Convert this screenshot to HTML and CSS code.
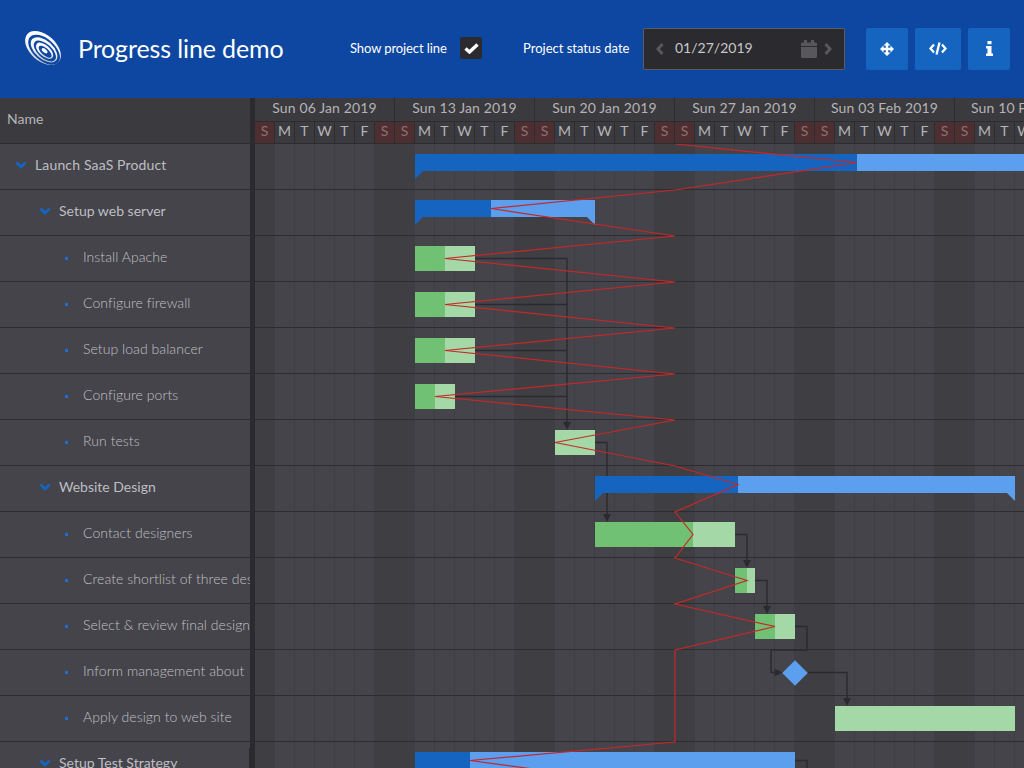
FILE: index.html
```html
<!DOCTYPE html>
<html>
<head>
    <title>Progress line demo</title>
    <link rel="stylesheet" href="styles.css">
</head>
<body>
    <header class="topbar">
        <svg class="logo" width="38" height="38" viewBox="0 0 38 38">
            <defs>
                <linearGradient id="logo-shine" x1="0" y1="0" x2="1" y2="1">
                    <stop offset="0" stop-color="#ffffff"/>
                    <stop offset="0.55" stop-color="#f2f4f8"/>
                    <stop offset="1" stop-color="#a9adb6"/>
                </linearGradient>
            </defs>
            <g transform="rotate(42 19 19)">
                <ellipse cx="19" cy="19" rx="21" ry="13" fill="url(#logo-shine)"/>
                <ellipse cx="21" cy="19.600" rx="19" ry="10.800" fill="#0d47a1"/>
                <ellipse cx="21" cy="19.600" rx="16" ry="9" fill="url(#logo-shine)"/>
                <ellipse cx="22.400" cy="20" rx="13.500" ry="7" fill="#0d47a1"/>
                <ellipse cx="22" cy="20" rx="10.500" ry="5.500" fill="url(#logo-shine)"/>
                <ellipse cx="23" cy="20.300" rx="8" ry="3.600" fill="#0d47a1"/>
                <ellipse cx="22" cy="20" rx="3.500" ry="1.800" fill="#ffffff"/>
            </g>
        </svg>
        <h1 class="title">Progress line demo</h1>
        <label class="toggle">
            <span>Show project line</span>
            <span class="checkbox">
                <svg width="15" height="11" viewBox="0 0 15 11"><path d="M1.500 5.500 5.500 9 13.500 1.500" fill="none" stroke="#fff" stroke-width="3.400"/></svg>
            </span>
        </label>
        <span class="status-label">Project status date</span>
        <div class="datefield">
            <svg class="chevron" width="8" height="12" viewBox="0 0 8 12"><path d="M6.500 1 2 6l4.500 5" fill="none" stroke="#58585c" stroke-width="3"/></svg>
            <span class="datevalue">01/27/2019</span>
            <svg class="calendar" width="16" height="18" viewBox="0 0 16 18">
                <path d="M0 7h16v9.500a1.500 1.500 0 0 1-1.500 1.500h-13A1.500 1.500 0 0 1 0 16.500zM0 6V4a1.500 1.500 0 0 1 1.500-1.500H3V0h3v2.500h4V0h3v2.500h1.500A1.500 1.500 0 0 1 16 4v2z" fill="#58585c"/>
            </svg>
            <svg class="chevron" width="8" height="12" viewBox="0 0 8 12"><path d="M1.500 1 6 6l-4.500 5" fill="none" stroke="#58585c" stroke-width="3"/></svg>
        </div>
        <div class="actions">
            <button class="action wide-42">
                <svg width="14" height="14" viewBox="0 0 14 14"><path d="M7 0l3.500 3.500H8.200v2.300h2.300V3.500L14 7l-3.500 3.500V8.200H8.200v2.300h2.300L7 14l-3.500-3.500h2.300V8.200H3.500v2.300L0 7l3.500-3.500v2.300h2.300V3.500H3.500z" fill="#fff"/></svg>
            </button>
            <button class="action wide-46">
                <svg width="18" height="13" viewBox="0 0 18 13"><path d="M5 2.500 1.500 6.500 5 10.500M13 2.500l3.500 4-3.500 4M10.500.5l-3 12" fill="none" stroke="#fff" stroke-width="2.300"/></svg>
            </button>
            <button class="action wide-42">
                <svg width="7" height="15" viewBox="0 0 7 15"><path d="M1.500 0h4v3.200h-4zM0 5h5.500v7.500H7V15H0v-2.500h1.500V7.500H0z" fill="#fff"/></svg>
            </button>
        </div>
    </header>

    <main class="gantt">
        <section class="tree">
            <div class="tree-head">Name</div>
            <div class="row level-0"><svg class="expander" width="12" height="8" viewBox="0 0 12 8"><path d="M1.500 1.500 6 6l4.500-4.500" fill="none" stroke="#1565c0" stroke-width="2.800"/></svg>Launch SaaS Product</div>
            <div class="row level-1"><svg class="expander" width="12" height="8" viewBox="0 0 12 8"><path d="M1.500 1.500 6 6l4.500-4.500" fill="none" stroke="#1565c0" stroke-width="2.800"/></svg>Setup web server</div>
            <div class="row level-2"><i class="dot"></i>Install Apache</div>
            <div class="row level-2"><i class="dot"></i>Configure firewall</div>
            <div class="row level-2"><i class="dot"></i>Setup load balancer</div>
            <div class="row level-2"><i class="dot"></i>Configure ports</div>
            <div class="row level-2"><i class="dot"></i>Run tests</div>
            <div class="row level-1"><svg class="expander" width="12" height="8" viewBox="0 0 12 8"><path d="M1.500 1.500 6 6l4.500-4.500" fill="none" stroke="#1565c0" stroke-width="2.800"/></svg>Website Design</div>
            <div class="row level-2"><i class="dot"></i>Contact designers</div>
            <div class="row level-2"><i class="dot"></i>Create shortlist of three designers</div>
            <div class="row level-2"><i class="dot"></i>Select &amp; review final design</div>
            <div class="row level-2"><i class="dot"></i>Inform management about</div>
            <div class="row level-2"><i class="dot"></i>Apply design to web site</div>
            <div class="row level-1"><svg class="expander" width="12" height="8" viewBox="0 0 12 8"><path d="M1.500 1.500 6 6l4.500-4.500" fill="none" stroke="#1565c0" stroke-width="2.800"/></svg>Setup Test Strategy</div>
        </section>

        <div class="splitter"></div>

        <section class="timeline">
            <div class="weeks">
                <span>Sun 06 Jan 2019</span>
                <span>Sun 13 Jan 2019</span>
                <span>Sun 20 Jan 2019</span>
                <span>Sun 27 Jan 2019</span>
                <span>Sun 03 Feb 2019</span>
                <span>Sun 10 Feb 2019</span>
            </div>
            <div class="days">
                <span class="off">S</span><span>M</span><span>T</span><span>W</span><span>T</span><span>F</span><span class="off">S</span>
                <span class="off">S</span><span>M</span><span>T</span><span>W</span><span>T</span><span>F</span><span class="off">S</span>
                <span class="off">S</span><span>M</span><span>T</span><span>W</span><span>T</span><span>F</span><span class="off">S</span>
                <span class="off">S</span><span>M</span><span>T</span><span>W</span><span>T</span><span>F</span><span class="off">S</span>
                <span class="off">S</span><span>M</span><span>T</span><span>W</span><span>T</span><span>F</span><span class="off">S</span>
                <span class="off">S</span><span>M</span><span>T</span><span>W</span><span>T</span><span>F</span><span class="off">S</span>
            </div>
            <div class="chart">
                <svg class="links" width="769" height="625" viewBox="255 144 769 625">
                    <g fill="none" stroke="#2b2a2e" stroke-width="1.400">
                        <path d="M475 258.500H567V424"/>
                        <path d="M475 304.500H567"/>
                        <path d="M475 350.500H567"/>
                        <path d="M455 396.500H567"/>
                        <path d="M595 442.500H607V516"/>
                        <path d="M735 534.500H747V562"/>
                        <path d="M755 580.500H767V608"/>
                        <path d="M795 626.500H807V650H771V672.500H776"/>
                        <path d="M808 672.500H847V700"/>
                        <path d="M795 760.500H807V769"/>
                    </g>
                    <g fill="#2b2a2e">
                        <path d="M563 422h8l-4 8z"/>
                        <path d="M603 514h8l-4 8z"/>
                        <path d="M743 560h8l-4 8z"/>
                        <path d="M763 606h8l-4 8z"/>
                        <path d="M774.500 668.500v8l8-4z"/>
                        <path d="M843 698h8l-4 8z"/>
                    </g>
                </svg>

                <div class="bar summary launch"><div class="done"></div></div>
                <div class="bar summary webserver"><div class="done"></div></div>
                <div class="bar task apache"><div class="done"></div></div>
                <div class="bar task firewall"><div class="done"></div></div>
                <div class="bar task balancer"><div class="done"></div></div>
                <div class="bar task ports"><div class="done"></div></div>
                <div class="bar task runtests"></div>
                <div class="bar summary website"><div class="done"></div></div>
                <div class="bar task contact"><div class="done"></div></div>
                <div class="bar task shortlist"><div class="done"></div></div>
                <div class="bar task review"><div class="done"></div></div>
                <div class="milestone"></div>
                <div class="bar task applydesign"></div>
                <div class="bar summary teststrategy"><div class="done"></div></div>

                <svg class="progress-line" width="769" height="625" viewBox="255 144 769 625">
                    <polyline fill="none" stroke="#c62828" stroke-width="1.200"
                        points="675,144 857,162.500 675,190 491,208.500 675,236 445,258.500 675,282 445,304.500 675,328 445,350.500 675,374 435,396.500 675,420 555,442.500 675,466 738,484.500 675,512 693,534.500 675,558 747,580.500 675,604 775,626.500 675,650 675,742 470,760.500 675,788"/>
                </svg>
            </div>
        </section>
    </main>
</body>
</html>
```
FILE: styles.css
```css
* {
    box-sizing: border-box;
}

html, body {
    height: 100%;
}

body {
    margin: 0;
    overflow: hidden;
    font-family: Lato, "Open Sans", sans-serif;
    background-color: #45444b;
}

.topbar {
    display: flex;
    align-items: center;
    height: 98px;
    padding-left: 24px;
    background-color: #0d47a1;
    color: #fff;
}

.logo {
    flex: none;
    margin-top: -2px;
}

.title {
    width: 272px;
    margin: -2px 0 0 16px;
    font-size: 25px;
    font-weight: 400;
    letter-spacing: -0.12px;
    white-space: nowrap;
}

.toggle {
    display: flex;
    align-items: center;
    width: 173px;
    font-size: 13px;
    letter-spacing: -0.1px;
}

.toggle span:first-child {
    width: 110px;
    margin-top: -3px;
}

.checkbox {
    display: flex;
    align-items: center;
    justify-content: center;
    width: 22px;
    height: 22px;
    margin-top: -2px;
    border-radius: 2px;
    background-color: #2b2a2e;
}

.status-label {
    width: 120px;
    margin-top: -2px;
    font-size: 13px;
}

.datefield {
    display: flex;
    align-items: center;
    width: 202px;
    height: 42px;
    padding: 0 12px;
    margin-top: -1px;
    border: 1px solid #5c5c60;
    border-radius: 2px;
    background-color: #2b2a2e;
    color: #c8c8ca;
    font-size: 14px;
}

.datevalue {
    flex: 1;
    margin-left: 11px;
    margin-top: -2px;
}

.calendar {
    margin-right: 7px;
}

.actions {
    display: flex;
    gap: 7px;
    margin-left: 21px;
    margin-top: -1px;
}

.action {
    display: flex;
    align-items: center;
    justify-content: center;
    height: 42px;
    padding: 0;
    border: none;
    border-radius: 2px;
    background-color: #1565c0;
}

.wide-42 {
    width: 42px;
}

.wide-46 {
    width: 46px;
}

.gantt {
    display: flex;
    height: 670px;
}

.tree {
    flex: none;
    width: 250px;
    overflow: hidden;
}

.tree-head {
    display: flex;
    align-items: center;
    height: 46px;
    padding-left: 7px;
    padding-bottom: 4px;
    background-color: #3b3a3f;
    border-bottom: 1px solid #2d2c30;
    color: #b4b4b7;
    font-size: 14px;
}

.row {
    display: flex;
    align-items: center;
    height: 46px;
    padding-bottom: 4px;
    border-bottom: 1px solid #2d2c30;
    color: #c0c0c4;
    font-size: 14px;
    font-weight: 300;
    letter-spacing: 0.06px;
    white-space: nowrap;
}

.level-0, .level-1 {
    color: #bebec2;
    font-weight: 400;
    letter-spacing: 0;
}

.level-0 {
    padding-left: 15px;
    letter-spacing: 0.15px;
}

.level-1 {
    padding-left: 39px;
}

.level-2 {
    padding-left: 65px;
}

.expander {
    flex: none;
    margin-right: 8px;
}

.dot {
    flex: none;
    width: 3px;
    height: 3px;
    margin-top: 4px;
    margin-right: 15px;
    background-color: #1e6fd0;
}

.splitter {
    position: relative;
    flex: none;
    width: 5px;
    background-color: #2b2a2e;
}

/* grab handle sticking out of the splitter near the bottom */
.splitter::before {
    content: "";
    position: absolute;
    left: -1px;
    top: 650px;
    width: 1px;
    height: 20px;
    background-color: #2b2a2e;
}

.timeline {
    flex: 1;
    overflow: hidden;
}

.weeks {
    display: flex;
    height: 23px;
    background-color: #3b3a3f;
}

.weeks span {
    flex: none;
    width: 140px;
    border-right: 1px solid #2d2c30;
    color: #b4b4b7;
    font-size: 14px;
    letter-spacing: 0.13px;
    line-height: 19px;
    text-align: center;
    white-space: nowrap;
}

.days {
    display: flex;
    height: 23px;
    background-color: #3b3a3f;
    border-bottom: 1px solid #2d2c30;
    border-top: 1px solid #2d2c30;
}

.days span {
    flex: none;
    width: 20px;
    border-right: 1px solid #2d2c30;
    color: #b4b4b7;
    font-size: 14px;
    line-height: 18px;
    text-align: center;
}

.days .off {
    background-color: #4e2f31;
    color: #8f7072;
}

.chart {
    position: relative;
    height: 624px;
    background-color: #45444b;
    background-image:
        repeating-linear-gradient(to bottom, transparent 0, transparent 45px, #2d2c30 45px, #2d2c30 46px),
        repeating-linear-gradient(to right, transparent 0, transparent 19px, #3f3e44 19px, #3f3e44 20px),
        repeating-linear-gradient(to right, #3f3e43 0, #3f3e43 20px, transparent 20px, transparent 120px, #3f3e43 120px, #3f3e43 140px);
}

.links, .progress-line {
    position: absolute;
    left: 0;
    top: 0;
}

.bar {
    position: absolute;
}

.done {
    height: 100%;
}

.task {
    height: 25px;
    background-color: #a5d8a7;
}

.task .done {
    background-color: #70c173;
}

.summary {
    height: 17px;
    background-color: #5c9fee;
}

.summary .done {
    background-color: #1565c0;
}

/* little flags hanging off the ends of a summary bar */
.summary::before {
    content: "";
    position: absolute;
    left: 0;
    top: 100%;
    border-top: 8px solid #1565c0;
    border-right: 8px solid transparent;
}

.summary::after {
    content: "";
    position: absolute;
    right: 0;
    top: 100%;
    border-top: 8px solid #5c9fee;
    border-left: 8px solid transparent;
}

.launch { left: 160px; top: 10px; width: 800px; }
.launch .done { width: 442px; }

.webserver { left: 160px; top: 56px; width: 180px; }
.webserver .done { width: 76px; }

.apache { left: 160px; top: 102px; width: 60px; }
.apache .done { width: 30px; }

.firewall { left: 160px; top: 148px; width: 60px; }
.firewall .done { width: 30px; }

.balancer { left: 160px; top: 194px; width: 60px; }
.balancer .done { width: 30px; }

.ports { left: 160px; top: 240px; width: 40px; }
.ports .done { width: 20px; }

.runtests { left: 300px; top: 286px; width: 40px; }

.website { left: 340px; top: 332px; width: 420px; }
.website .done { width: 143px; }

.contact { left: 340px; top: 378px; width: 140px; }
.contact .done { width: 98px; }

.shortlist { left: 480px; top: 424px; width: 20px; }
.shortlist .done { width: 12px; }

.review { left: 500px; top: 470px; width: 40px; }
.review .done { width: 20px; }

.milestone {
    position: absolute;
    left: 531px;
    top: 520px;
    width: 18px;
    height: 18px;
    background-color: #5c9fee;
    transform: rotate(45deg);
}

.applydesign { left: 580px; top: 562px; width: 180px; }

.teststrategy { left: 160px; top: 608px; width: 380px; }
.teststrategy .done { width: 55px; }
```
